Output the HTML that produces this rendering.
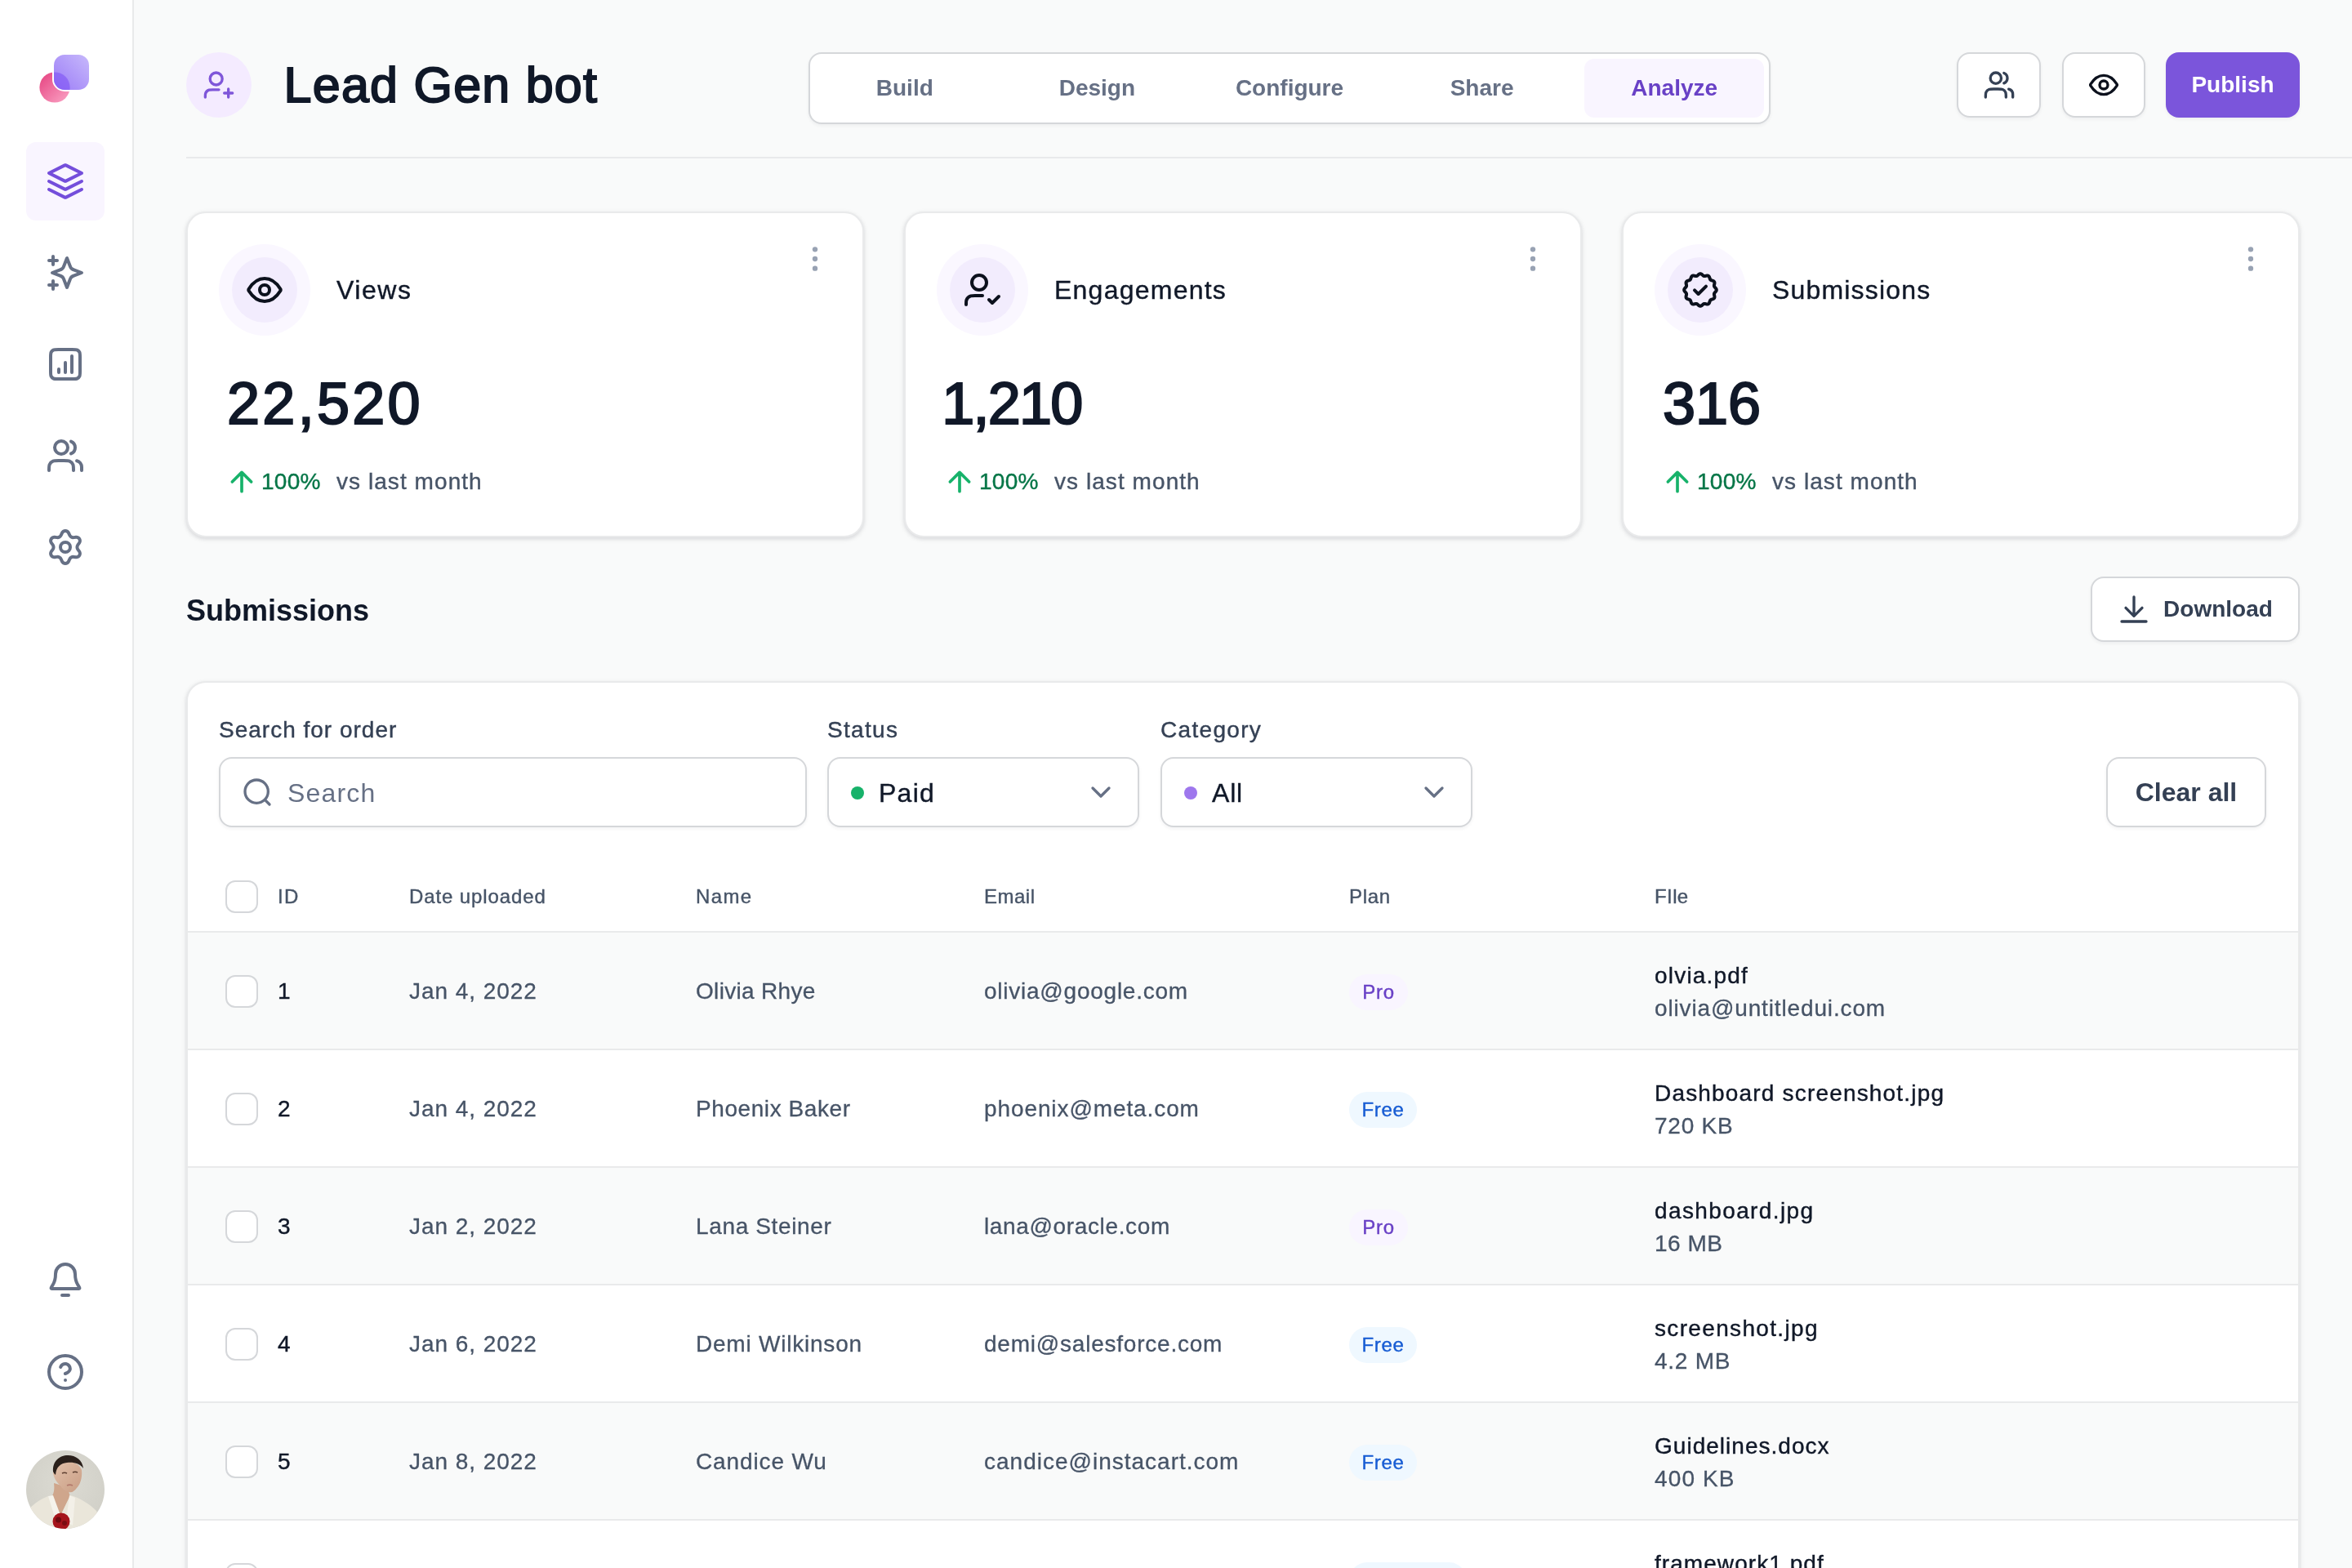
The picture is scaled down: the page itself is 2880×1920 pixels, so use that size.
<!DOCTYPE html>
<html>
<head>
<meta charset="utf-8">
<style>
*{box-sizing:border-box;margin:0;padding:0}
html,body{width:1440px;height:960px;overflow:hidden;background:#F9FAFA}
@media (min-width:2000px){html{zoom:2}}
body{font-family:"Liberation Sans",sans-serif;color:#101828;position:relative;will-change:transform}
.abs{position:absolute}
svg{display:block}
.sb{position:absolute;left:0;top:0;width:82px;height:960px;background:#fff;border-right:1px solid #E9EAEB}
.nav{position:absolute;left:16px;width:48px;height:48px;border-radius:6px;display:flex;align-items:center;justify-content:center}
.nav.act{background:#F9F5FF}
.ic{fill:none;stroke-linecap:round;stroke-linejoin:round}
</style>
</head>
<body>
<!-- SIDEBAR -->
<div class="sb">
  <!-- logo -->
  <svg class="abs" style="left:20px;top:28px" width="40" height="40" viewBox="0 0 40 40">
    <defs>
      <linearGradient id="lgc" x1="0" y1="0" x2="1" y2="1"><stop offset="0" stop-color="#E5407F"/><stop offset="1" stop-color="#FBA6C6"/></linearGradient>
      <linearGradient id="lgs" x1="1" y1="0" x2="0" y2="1"><stop offset="0" stop-color="#C7B9FB"/><stop offset="1" stop-color="#9B7BF7"/></linearGradient>
      <clipPath id="lsq"><rect x="13" y="5.5" width="21.5" height="21.5" rx="6.5"/></clipPath>
    </defs>
    <circle cx="13.5" cy="25.5" r="9.3" fill="url(#lgc)"/>
    <rect x="12" y="4.5" width="23.5" height="23.5" rx="7.5" fill="#fff"/>
    <rect x="13" y="5.5" width="21.5" height="21.5" rx="6.5" fill="url(#lgs)"/>
    <circle cx="13.5" cy="25.5" r="9.3" fill="#7A4CF4" opacity=".55" clip-path="url(#lsq)"/>
  </svg>
  <div class="nav act" style="top:87px">
    <svg width="24" height="24" viewBox="0 0 24 24" class="ic" stroke="#744EDB" stroke-width="2"><path d="M2 12L11.642 16.821C11.773 16.887 11.839 16.92 11.908 16.933C11.969 16.944 12.031 16.944 12.092 16.933C12.161 16.92 12.227 16.887 12.358 16.821L22 12M2 17L11.642 21.821C11.773 21.887 11.839 21.92 11.908 21.933C11.969 21.944 12.031 21.944 12.092 21.933C12.161 21.92 12.227 21.887 12.358 21.821L22 17M2 7L11.642 2.179C11.773 2.113 11.839 2.08 11.908 2.067C11.969 2.056 12.031 2.056 12.092 2.067C12.161 2.08 12.227 2.113 12.358 2.179L22 7L12.358 11.821C12.227 11.887 12.161 11.92 12.092 11.933C12.031 11.944 11.969 11.944 11.908 11.933C11.839 11.92 11.773 11.887 11.642 11.821L2 7Z"/></svg>
  </div>
  <div class="nav" style="top:143px">
    <svg width="24" height="24" viewBox="0 0 24 24" class="ic" stroke="#667085" stroke-width="2"><path d="M4.5 22V17M4.5 7V2M2 4.5H7M2 19.5H7M13 3L11.266 7.509C10.984 8.242 10.843 8.609 10.624 8.917C10.429 9.19 10.19 9.429 9.917 9.624C9.609 9.843 9.242 9.984 8.509 10.266L4 12L8.509 13.734C9.242 14.016 9.609 14.157 9.917 14.376C10.19 14.571 10.429 14.81 10.624 15.083C10.843 15.391 10.984 15.758 11.266 16.491L13 21L14.734 16.491C15.016 15.758 15.157 15.391 15.376 15.083C15.571 14.81 15.81 14.571 16.083 14.376C16.391 14.157 16.758 14.016 17.491 13.734L22 12L17.491 10.266C16.758 9.984 16.391 9.843 16.083 9.624C15.81 9.429 15.571 9.19 15.376 8.917C15.157 8.609 15.016 8.242 14.734 7.509L13 3Z"/></svg>
  </div>
  <div class="nav" style="top:199px">
    <svg width="24" height="24" viewBox="0 0 24 24" class="ic" stroke="#667085" stroke-width="2"><path d="M8 15V17M12 11V17M16 7V17M7.8 21H16.2C17.88 21 18.72 21 19.362 20.673C19.927 20.385 20.385 19.927 20.673 19.362C21 18.72 21 17.88 21 16.2V7.8C21 6.12 21 5.28 20.673 4.638C20.385 4.073 19.927 3.615 19.362 3.327C18.72 3 17.88 3 16.2 3H7.8C6.12 3 5.28 3 4.638 3.327C4.073 3.615 3.615 4.073 3.327 4.638C3 5.28 3 6.12 3 7.8V16.2C3 17.88 3 18.72 3.327 19.362C3.615 19.927 4.073 20.385 4.638 20.673C5.28 21 6.12 21 7.8 21Z"/></svg>
  </div>
  <div class="nav" style="top:255px">
    <svg width="24" height="24" viewBox="0 0 24 24" class="ic" stroke="#667085" stroke-width="2"><path d="M22 21V19C22 17.136 20.725 15.57 19 15.126M15.5 3.291C16.966 3.884 18 5.321 18 7C18 8.679 16.966 10.116 15.5 10.709M17 21C17 19.136 17 18.204 16.696 17.469C16.29 16.489 15.511 15.71 14.531 15.304C13.796 15 12.864 15 11 15H8C6.136 15 5.204 15 4.469 15.304C3.489 15.71 2.71 16.489 2.304 17.469C2 18.204 2 19.136 2 21M13.5 7C13.5 9.209 11.709 11 9.5 11C7.291 11 5.5 9.209 5.5 7C5.5 4.791 7.291 3 9.5 3C11.709 3 13.5 4.791 13.5 7Z"/></svg>
  </div>
  <div class="nav" style="top:311px">
    <svg width="24" height="24" viewBox="0 0 24 24" class="ic" stroke="#667085" stroke-width="2"><path d="M9.395 19.371L9.979 20.686C10.153 21.077 10.437 21.409 10.796 21.643C11.155 21.876 11.574 22 12.002 22C12.43 22 12.849 21.876 13.208 21.643C13.567 21.409 13.85 21.077 14.024 20.686L14.608 19.371C14.816 18.905 15.166 18.516 15.608 18.26C16.053 18.003 16.568 17.894 17.078 17.948L18.508 18.1C18.934 18.145 19.364 18.066 19.745 17.871C20.127 17.677 20.443 17.376 20.657 17.006C20.871 16.635 20.974 16.21 20.951 15.783C20.929 15.356 20.783 14.944 20.531 14.598L19.684 13.434C19.383 13.017 19.221 12.515 19.224 12C19.224 11.487 19.386 10.986 19.688 10.571L20.535 9.408C20.787 9.062 20.933 8.65 20.955 8.223C20.978 7.795 20.876 7.371 20.662 7C20.448 6.629 20.131 6.328 19.75 6.134C19.368 5.94 18.939 5.861 18.513 5.906L17.083 6.058C16.572 6.111 16.058 6.002 15.613 5.746C15.17 5.488 14.82 5.097 14.613 4.629L14.024 3.314C13.85 2.923 13.567 2.591 13.208 2.357C12.849 2.124 12.43 2 12.002 2C11.574 2 11.155 2.124 10.796 2.357C10.437 2.591 10.153 2.923 9.979 3.314L9.395 4.629C9.188 5.097 8.838 5.488 8.395 5.746C7.95 6.002 7.436 6.111 6.925 6.058L5.491 5.906C5.065 5.861 4.635 5.94 4.254 6.134C3.872 6.328 3.556 6.629 3.342 7C3.128 7.371 3.025 7.795 3.048 8.223C3.07 8.65 3.217 9.062 3.468 9.408L4.315 10.571C4.617 10.986 4.78 11.487 4.779 12C4.78 12.513 4.617 13.014 4.315 13.429L3.468 14.592C3.217 14.938 3.07 15.35 3.048 15.777C3.025 16.205 3.128 16.63 3.342 17C3.556 17.371 3.873 17.671 4.254 17.865C4.635 18.06 5.065 18.139 5.491 18.094L6.921 17.942C7.431 17.889 7.946 17.998 8.391 18.254C8.835 18.511 9.187 18.902 9.395 19.371Z"/><path d="M12 15C13.657 15 15 13.657 15 12C15 10.343 13.657 9 12 9C10.343 9 9 10.343 9 12C9 13.657 10.343 15 12 15Z"/></svg>
  </div>
  <div class="nav" style="top:760px">
    <svg width="24" height="24" viewBox="0 0 24 24" class="ic" stroke="#667085" stroke-width="2"><path d="M10 21H14M18 8C18 6.409 17.368 4.883 16.243 3.757C15.117 2.632 13.591 2 12 2C10.409 2 8.883 2.632 7.757 3.757C6.632 4.883 6 6.409 6 8C6 11.09 5.22 13.206 4.351 14.603C3.617 15.782 3.25 16.371 3.264 16.536C3.279 16.718 3.317 16.787 3.464 16.896C3.597 16.995 4.194 16.995 5.389 16.995H18.611C19.806 16.995 20.403 16.995 20.536 16.896C20.683 16.787 20.721 16.718 20.736 16.536C20.75 16.371 20.383 15.782 19.649 14.603C18.78 13.206 18 11.09 18 8Z"/></svg>
  </div>
  <div class="nav" style="top:816px">
    <svg width="24" height="24" viewBox="0 0 24 24" class="ic" stroke="#667085" stroke-width="2"><path d="M9.09 9C9.325 8.332 9.789 7.768 10.4 7.409C11.011 7.051 11.729 6.919 12.427 7.039C13.125 7.159 13.759 7.522 14.215 8.064C14.671 8.606 14.921 9.292 14.92 10C14.92 12 11.92 13 11.92 13M12 17H12.01M22 12C22 17.523 17.523 22 12 22C6.477 22 2 17.523 2 12C2 6.477 6.477 2 12 2C17.523 2 22 6.477 22 12Z"/></svg>
  </div>
  <!-- avatar -->
  <svg class="abs" style="left:16px;top:888px" width="48" height="48" viewBox="0 0 96 96">
    <defs><clipPath id="avc"><circle cx="48" cy="48" r="48"/></clipPath>
    <radialGradient id="avbg" cx="0.5" cy="0.4" r="0.7"><stop offset="0" stop-color="#DCDBD3"/><stop offset="1" stop-color="#CFCEC6"/></radialGradient>
    <linearGradient id="avsk" x1="0" y1="0" x2="1" y2="1"><stop offset="0" stop-color="#E2C1AA"/><stop offset="1" stop-color="#C99E85"/></linearGradient></defs>
    <g clip-path="url(#avc)">
      <rect width="96" height="96" fill="url(#avbg)"/>
      <path d="M34 40 C35 48 34 54 30 58 L42 80 L54 56 C52 52 52 49 53 46 Z" fill="#CFA68C"/>
      <path d="M0 76 C6 68 16 60 27 56 L42 80 L54 55 C66 58 78 66 86 74 L96 96 L0 96 Z" fill="#EAE6DA"/>
      <path d="M27 56 L33 55 L43 82 L37 88 Z" fill="#F5F3EC"/>
      <path d="M53 55 L60 58 L57 92 L49 86 Z" fill="#F3F0E8"/>
      <path d="M42 15 C52 12 64 14 68 24 C69 34 66 42 62 46 C59 50 56 52 53 51 C48 50 44 47 42 43 C38 40 34 34 33 28 C34 22 37 17 42 15 Z" fill="url(#avsk)"/>
      <path d="M33 26 C32 13 41 6 51 6 C61 6 69 12 70 22 C66 16 58 14 50 15 C42 16 37 20 36 30 C35 29 34 28 33 26 Z" fill="#2A201B"/>
      <path d="M44 28 C46 27 48 27 50 28 M57 27 C59 26 61 26 63 27" stroke="#5E4032" stroke-width="1.4" fill="none"/>
      <path d="M50 43 C52 42 55 42 57 43" stroke="#B27A6C" stroke-width="1.6" fill="none"/>
      <circle cx="43" cy="87" r="10.5" fill="#A5141B"/>
      <circle cx="39.5" cy="85" r="3.5" fill="#6E0B10"/>
      <circle cx="47" cy="89" r="3" fill="#7A0D12"/>
    </g>
  </svg>
</div>

<!-- MAIN -->
<div id="main">
<style>
.t{position:absolute;white-space:nowrap;line-height:1;letter-spacing:.03em}
.t.b{letter-spacing:0}
.btn{position:absolute;background:#fff;border:1px solid #D5D7DA;border-radius:8px;box-shadow:0 1px 2px rgba(16,24,40,.05);display:flex;align-items:center;justify-content:center}
.card{position:absolute;background:#fff;border:1px solid #E9EAEB;border-radius:12px;box-shadow:0 1px 3px rgba(16,24,40,.10),0 1px 2px rgba(16,24,40,.06)}
.fi{position:absolute;width:56px;height:56px;border-radius:50%;background:#FAF7FF;display:flex;align-items:center;justify-content:center}
.fi>div{width:40px;height:40px;border-radius:50%;background:#F2ECFD;display:flex;align-items:center;justify-content:center}
.lbl{font-size:14px;color:#344054;-webkit-text-stroke:.2px #344054}
.md{-webkit-text-stroke:.2px currentColor}
.inp{position:absolute;top:463.5px;height:43px;background:#fff;border:1px solid #D5D7DA;border-radius:8px;box-shadow:0 1px 2px rgba(16,24,40,.05)}
.row{position:absolute;left:0;width:1292px;height:72px;border-top:1px solid #E9EAEB}
.row.g{background:#F9FAFA}
.cb{position:absolute;left:23px;width:20px;height:20px;border:1px solid #D5D7DA;border-radius:6px;background:#fff}
.cell{font-size:14px;color:#475467;-webkit-text-stroke:.15px #475467}
.badge{position:absolute;height:22px;border-radius:11px;font-size:12px;display:flex;align-items:center;justify-content:center;letter-spacing:.03em;-webkit-text-stroke:.2px currentColor}
.pro{background:#F9F5FF;color:#6941C6}
.free{background:#EFF8FF;color:#175CD3}
</style>
<!-- HEADER -->
<div class="abs" style="left:114px;top:32px;width:40px;height:40px;border-radius:50%;background:#F4EBFF;display:flex;align-items:center;justify-content:center">
  <svg width="20" height="20" viewBox="0 0 24 24" class="ic" stroke="#7F56D9" stroke-width="2"><path d="M12 15.5H7.5C6.104 15.5 5.407 15.5 4.839 15.672C3.56 16.06 2.56 17.06 2.172 18.339C2 18.907 2 19.604 2 21M19 21V15M16 18H22M14.5 7.5C14.5 9.985 12.485 12 10 12C7.515 12 5.5 9.985 5.5 7.5C5.5 5.015 7.515 3 10 3C12.485 3 14.5 5.015 14.5 7.5Z"/></svg>
</div>
<div class="t" id="title" style="letter-spacing:0.62px;left:173.8px;top:37.2px;font-size:30.5px;font-weight:400;-webkit-text-stroke:1px #101828;color:#101828">Lead Gen bot</div>

<div class="abs" style="left:495px;top:32px;width:589px;height:44px;background:#fff;border:1px solid #D5D7DA;border-radius:8px;box-shadow:0 1px 2px rgba(16,24,40,.05);padding:3px;display:flex;gap:8px">
  <div class="tab" style="flex:1;display:flex;align-items:center;justify-content:center;font-size:14px;font-weight:700;color:#667085">Build</div>
  <div class="tab" style="flex:1;display:flex;align-items:center;justify-content:center;font-size:14px;font-weight:700;color:#667085">Design</div>
  <div class="tab" style="flex:1;display:flex;align-items:center;justify-content:center;font-size:14px;font-weight:700;color:#667085">Configure</div>
  <div class="tab" style="flex:1;display:flex;align-items:center;justify-content:center;font-size:14px;font-weight:700;color:#667085">Share</div>
  <div class="tab" style="flex:1;display:flex;align-items:center;justify-content:center;font-size:14px;font-weight:700;color:#6941C6;background:#F9F5FF;border-radius:6px">Analyze</div>
</div>

<div class="btn" style="left:1198px;top:32px;width:51.5px;height:40px">
  <svg width="20" height="20" viewBox="0 0 24 24" class="ic" stroke="#344054" stroke-width="2"><path d="M22 21V19C22 17.136 20.725 15.57 19 15.126M15.5 3.291C16.966 3.884 18 5.321 18 7C18 8.679 16.966 10.116 15.5 10.709M17 21C17 19.136 17 18.204 16.696 17.469C16.29 16.489 15.511 15.71 14.531 15.304C13.796 15 12.864 15 11 15H8C6.136 15 5.204 15 4.469 15.304C3.489 15.71 2.71 16.489 2.304 17.469C2 18.204 2 19.136 2 21M13.5 7C13.5 9.209 11.709 11 9.5 11C7.291 11 5.5 9.209 5.5 7C5.5 4.791 7.291 3 9.5 3C11.709 3 13.5 4.791 13.5 7Z"/></svg>
</div>
<div class="btn" style="left:1262.5px;top:32px;width:51px;height:40px">
  <svg width="20" height="20" viewBox="0 0 24 24" class="ic" stroke="#0C111D" stroke-width="2"><path d="M2.42 12.713C2.284 12.498 2.216 12.39 2.178 12.223C2.149 12.098 2.149 11.902 2.178 11.777C2.216 11.61 2.284 11.502 2.42 11.287C3.546 9.505 6.895 5 12 5C17.105 5 20.455 9.505 21.58 11.287C21.716 11.502 21.785 11.61 21.822 11.777C21.851 11.902 21.851 12.098 21.822 12.223C21.785 12.39 21.716 12.498 21.58 12.713C20.455 14.495 17.105 19 12 19C6.895 19 3.546 14.495 2.42 12.713Z"/><path d="M12 15C13.657 15 15 13.657 15 12C15 10.343 13.657 9 12 9C10.343 9 9 10.343 9 12C9 13.657 10.343 15 12 15Z"/></svg>
</div>
<div class="abs" style="left:1326px;top:32px;width:82px;height:40px;border-radius:8px;background:#7B55DB;box-shadow:0 1px 2px rgba(16,24,40,.05);color:#fff;font-size:14px;font-weight:700;display:flex;align-items:center;justify-content:center">Publish</div>

<div class="abs" style="left:114px;top:96px;width:1326px;height:1px;background:#E9EAEB"></div>

<!-- CARDS -->
<div class="card" style="left:114px;top:129.5px;width:415px;height:199.5px">
  <div class="fi" style="left:19px;top:19px"><div><svg width="24" height="24" viewBox="0 0 24 24" class="ic" stroke="#0C111D" stroke-width="2"><path d="M2.42 12.713C2.284 12.498 2.216 12.39 2.178 12.223C2.149 12.098 2.149 11.902 2.178 11.777C2.216 11.61 2.284 11.502 2.42 11.287C3.546 9.505 6.895 5 12 5C17.105 5 20.455 9.505 21.58 11.287C21.716 11.502 21.785 11.61 21.822 11.777C21.851 11.902 21.851 12.098 21.822 12.223C21.785 12.39 21.716 12.498 21.58 12.713C20.455 14.495 17.105 19 12 19C6.895 19 3.546 14.495 2.42 12.713Z"/><path d="M12 15C13.657 15 15 13.657 15 12C15 10.343 13.657 9 12 9C10.343 9 9 10.343 9 12C9 13.657 10.343 15 12 15Z"/></svg></div></div>
  <div class="t" style="left:91px;top:39px;font-size:16px;color:#101828;-webkit-text-stroke:.2px #101828;letter-spacing:0.78px">Views</div>
  <svg class="abs" style="left:373.8px;top:18px" width="20" height="20" viewBox="0 0 24 24" fill="#98A2B3"><circle cx="12" cy="5" r="1.9"/><circle cx="12" cy="12" r="1.9"/><circle cx="12" cy="19" r="1.9"/></svg>
  <div class="t b" style="left:24px;top:98.5px;font-size:36px;font-weight:400;-webkit-text-stroke:1.1px #101828;color:#101828;letter-spacing:1.64px">22,520</div>
  <svg class="abs" style="left:23.2px;top:154.5px" width="20" height="20" viewBox="0 0 24 24" fill="none" stroke="#17B26A" stroke-width="2.2" stroke-linecap="round" stroke-linejoin="round"><path d="M12 19V5M12 5L5 12M12 5L19 12"/></svg>
  <div class="t md" style="left:45px;top:157.5px;font-size:14px;color:#067647;letter-spacing:0.13px">100%</div>
  <div class="t md" style="left:91px;top:157.5px;font-size:14px;color:#475467;letter-spacing:0.53px">vs last month</div>
</div>
<div class="card" style="left:553.5px;top:129.5px;width:415px;height:199.5px">
  <div class="fi" style="left:19px;top:19px"><div><svg width="24" height="24" viewBox="0 0 24 24" class="ic" stroke="#0C111D" stroke-width="2"><path d="M12 15.5H7.5C6.104 15.5 5.407 15.5 4.839 15.672C3.56 16.06 2.56 17.06 2.172 18.339C2 18.907 2 19.604 2 21M16 18L18 20L22 16M14.5 7.5C14.5 9.985 12.485 12 10 12C7.515 12 5.5 9.985 5.5 7.5C5.5 5.015 7.515 3 10 3C12.485 3 14.5 5.015 14.5 7.5Z"/></svg></div></div>
  <div class="t" style="left:91px;top:39px;font-size:16px;color:#101828;-webkit-text-stroke:.2px #101828;letter-spacing:0.62px">Engagements</div>
  <svg class="abs" style="left:373.8px;top:18px" width="20" height="20" viewBox="0 0 24 24" fill="#98A2B3"><circle cx="12" cy="5" r="1.9"/><circle cx="12" cy="12" r="1.9"/><circle cx="12" cy="19" r="1.9"/></svg>
  <div class="t b" style="left:22.1px;top:98.5px;font-size:36px;font-weight:400;-webkit-text-stroke:1.1px #101828;color:#101828;letter-spacing:-0.87px">1,210</div>
  <svg class="abs" style="left:23.2px;top:154.5px" width="20" height="20" viewBox="0 0 24 24" fill="none" stroke="#17B26A" stroke-width="2.2" stroke-linecap="round" stroke-linejoin="round"><path d="M12 19V5M12 5L5 12M12 5L19 12"/></svg>
  <div class="t md" style="left:45px;top:157.5px;font-size:14px;color:#067647;letter-spacing:0.13px">100%</div>
  <div class="t md" style="left:91px;top:157.5px;font-size:14px;color:#475467;letter-spacing:0.53px">vs last month</div>
</div>
<div class="card" style="left:993px;top:129.5px;width:415px;height:199.5px">
  <div class="fi" style="left:19px;top:19px"><div><svg width="24" height="24" viewBox="0 0 24 24" class="ic" stroke="#0C111D" stroke-width="2"><path d="M8.5 12.2L10.8 14.5L15.5 9.8"/><path d="M12.00 2.10 L12.26 2.13 L12.51 2.22 L12.76 2.36 L13.00 2.53 L13.22 2.73 L13.44 2.93 L13.64 3.12 L13.85 3.29 L14.06 3.42 L14.28 3.50 L14.51 3.54 L14.75 3.53 L15.01 3.49 L15.29 3.43 L15.58 3.36 L15.87 3.30 L16.16 3.27 L16.45 3.27 L16.71 3.32 L16.95 3.43 L17.16 3.58 L17.33 3.79 L17.48 4.03 L17.60 4.30 L17.69 4.58 L17.78 4.87 L17.86 5.14 L17.96 5.38 L18.08 5.60 L18.22 5.78 L18.40 5.92 L18.62 6.04 L18.86 6.14 L19.13 6.22 L19.42 6.31 L19.70 6.40 L19.97 6.52 L20.21 6.67 L20.42 6.84 L20.57 7.05 L20.68 7.29 L20.73 7.55 L20.73 7.84 L20.70 8.13 L20.64 8.42 L20.57 8.71 L20.51 8.99 L20.47 9.25 L20.46 9.49 L20.50 9.72 L20.58 9.94 L20.71 10.15 L20.88 10.36 L21.07 10.56 L21.27 10.78 L21.47 11.00 L21.64 11.24 L21.78 11.49 L21.87 11.74 L21.90 12.00 L21.87 12.26 L21.78 12.51 L21.64 12.76 L21.47 13.00 L21.27 13.22 L21.07 13.44 L20.88 13.64 L20.71 13.85 L20.58 14.06 L20.50 14.28 L20.46 14.51 L20.47 14.75 L20.51 15.01 L20.57 15.29 L20.64 15.58 L20.70 15.87 L20.73 16.16 L20.73 16.45 L20.68 16.71 L20.57 16.95 L20.42 17.16 L20.21 17.33 L19.97 17.48 L19.70 17.60 L19.42 17.69 L19.13 17.78 L18.86 17.86 L18.62 17.96 L18.40 18.08 L18.22 18.22 L18.08 18.40 L17.96 18.62 L17.86 18.86 L17.78 19.13 L17.69 19.42 L17.60 19.70 L17.48 19.97 L17.33 20.21 L17.16 20.42 L16.95 20.57 L16.71 20.68 L16.45 20.73 L16.16 20.73 L15.87 20.70 L15.58 20.64 L15.29 20.57 L15.01 20.51 L14.75 20.47 L14.51 20.46 L14.28 20.50 L14.06 20.58 L13.85 20.71 L13.64 20.88 L13.44 21.07 L13.22 21.27 L13.00 21.47 L12.76 21.64 L12.51 21.78 L12.26 21.87 L12.00 21.90 L11.74 21.87 L11.49 21.78 L11.24 21.64 L11.00 21.47 L10.78 21.27 L10.56 21.07 L10.36 20.88 L10.15 20.71 L9.94 20.58 L9.72 20.50 L9.49 20.46 L9.25 20.47 L8.99 20.51 L8.71 20.57 L8.42 20.64 L8.13 20.70 L7.84 20.73 L7.55 20.73 L7.29 20.68 L7.05 20.57 L6.84 20.42 L6.67 20.21 L6.52 19.97 L6.40 19.70 L6.31 19.42 L6.22 19.13 L6.14 18.86 L6.04 18.62 L5.92 18.40 L5.78 18.22 L5.60 18.08 L5.38 17.96 L5.14 17.86 L4.87 17.78 L4.58 17.69 L4.30 17.60 L4.03 17.48 L3.79 17.33 L3.58 17.16 L3.43 16.95 L3.32 16.71 L3.27 16.45 L3.27 16.16 L3.30 15.87 L3.36 15.58 L3.43 15.29 L3.49 15.01 L3.53 14.75 L3.54 14.51 L3.50 14.28 L3.42 14.06 L3.29 13.85 L3.12 13.64 L2.93 13.44 L2.73 13.22 L2.53 13.00 L2.36 12.76 L2.22 12.51 L2.13 12.26 L2.10 12.00 L2.13 11.74 L2.22 11.49 L2.36 11.24 L2.53 11.00 L2.73 10.78 L2.93 10.56 L3.12 10.36 L3.29 10.15 L3.42 9.94 L3.50 9.72 L3.54 9.49 L3.53 9.25 L3.49 8.99 L3.43 8.71 L3.36 8.42 L3.30 8.13 L3.27 7.84 L3.27 7.55 L3.32 7.29 L3.43 7.05 L3.58 6.84 L3.79 6.67 L4.03 6.52 L4.30 6.40 L4.58 6.31 L4.87 6.22 L5.14 6.14 L5.38 6.04 L5.60 5.92 L5.78 5.78 L5.92 5.60 L6.04 5.38 L6.14 5.14 L6.22 4.87 L6.31 4.58 L6.40 4.30 L6.52 4.03 L6.67 3.79 L6.84 3.58 L7.05 3.43 L7.29 3.32 L7.55 3.27 L7.84 3.27 L8.13 3.30 L8.42 3.36 L8.71 3.43 L8.99 3.49 L9.25 3.53 L9.49 3.54 L9.72 3.50 L9.94 3.42 L10.15 3.29 L10.36 3.12 L10.56 2.93 L10.78 2.73 L11.00 2.53 L11.24 2.36 L11.49 2.22 L11.74 2.13Z"/></svg></div></div>
  <div class="t" style="left:91px;top:39px;font-size:16px;color:#101828;-webkit-text-stroke:.2px #101828;letter-spacing:0.59px">Submissions</div>
  <svg class="abs" style="left:373.8px;top:18px" width="20" height="20" viewBox="0 0 24 24" fill="#98A2B3"><circle cx="12" cy="5" r="1.9"/><circle cx="12" cy="12" r="1.9"/><circle cx="12" cy="19" r="1.9"/></svg>
  <div class="t b" style="left:24px;top:98.5px;font-size:36px;font-weight:400;-webkit-text-stroke:1.1px #101828;color:#101828">316</div>
  <svg class="abs" style="left:23.2px;top:154.5px" width="20" height="20" viewBox="0 0 24 24" fill="none" stroke="#17B26A" stroke-width="2.2" stroke-linecap="round" stroke-linejoin="round"><path d="M12 19V5M12 5L5 12M12 5L19 12"/></svg>
  <div class="t md" style="left:45px;top:157.5px;font-size:14px;color:#067647;letter-spacing:0.13px">100%</div>
  <div class="t md" style="left:91px;top:157.5px;font-size:14px;color:#475467;letter-spacing:0.53px">vs last month</div>
</div>


<!-- SUBMISSIONS -->
<div class="t b" style="left:114px;top:365px;font-size:18px;font-weight:700;color:#101828">Submissions</div>
<div class="btn" style="left:1280px;top:353px;width:128px;height:40px;gap:8px;font-size:14px;font-weight:700;color:#344054">
  <svg width="20" height="20" viewBox="0 0 24 24" class="ic" stroke="#344054" stroke-width="2"><path d="M21 21H3M18 11L12 17M12 17L6 11M12 17V3"/></svg>Download
</div>

<div class="card" style="left:114px;top:417px;width:1294px;height:600px;overflow:hidden;border-bottom:none;border-radius:12px 12px 0 0">
  <div class="t lbl" style="left:19px;top:22px;letter-spacing:0.5px">Search for order</div>
  <div class="inp" style="left:19px;top:45.5px;width:360px"></div>
  <svg class="abs" style="left:32.5px;top:57px" width="20" height="20" viewBox="0 0 24 24" fill="none" stroke="#667085" stroke-width="2" stroke-linecap="round" stroke-linejoin="round"><path d="M21 21L17.5 17.5M20 11.5C20 16.194 16.194 20 11.5 20C6.806 20 3 16.194 3 11.5C3 6.806 6.806 3 11.5 3C16.194 3 20 6.806 20 11.5Z"/></svg>
  <div class="t" style="left:61px;top:59.5px;font-size:16px;color:#667085;letter-spacing:0.58px">Search</div>

  <div class="t lbl" style="left:391.5px;top:22px;letter-spacing:0.66px">Status</div>
  <div class="inp" style="left:391.5px;top:45.5px;width:191px"></div>
  <div class="abs" style="left:406px;top:63.5px;width:8px;height:8px;border-radius:50%;background:#17B26A"></div>
  <div class="t" style="left:423px;top:59.5px;font-size:16px;color:#101828;-webkit-text-stroke:.2px #101828;letter-spacing:0.63px">Paid</div>
  <svg class="abs" style="left:548.8px;top:57px" width="20" height="20" viewBox="0 0 24 24" fill="none" stroke="#667085" stroke-width="2" stroke-linecap="round" stroke-linejoin="round"><path d="M6 9L12 15L18 9"/></svg>

  <div class="t lbl" style="left:595.5px;top:22px;letter-spacing:0.66px">Category</div>
  <div class="inp" style="left:595.5px;top:45.5px;width:191px"></div>
  <div class="abs" style="left:610px;top:63.5px;width:8px;height:8px;border-radius:50%;background:#9E77ED"></div>
  <div class="t" style="left:627px;top:59.5px;font-size:16px;color:#101828;-webkit-text-stroke:.2px #101828;letter-spacing:0.4px">All</div>
  <svg class="abs" style="left:752.8px;top:57px" width="20" height="20" viewBox="0 0 24 24" fill="none" stroke="#667085" stroke-width="2" stroke-linecap="round" stroke-linejoin="round"><path d="M6 9L12 15L18 9"/></svg>

  <div class="btn" style="left:1174.5px;top:45.5px;width:98px;height:43px;font-size:16px;font-weight:700;color:#344054">Clear all</div>

  <!-- table header -->
  <div class="cb" style="top:121px"></div>
  <div class="t" style="left:55px;top:125px;font-size:12px;color:#475467;-webkit-text-stroke:.2px #475467;letter-spacing:0.7px">ID</div>
  <div class="t" style="left:135.5px;top:125px;font-size:12px;color:#475467;-webkit-text-stroke:.2px #475467;letter-spacing:0.45px">Date uploaded</div>
  <div class="t" style="left:311px;top:125px;font-size:12px;color:#475467;-webkit-text-stroke:.2px #475467;letter-spacing:0.7px">Name</div>
  <div class="t" style="left:487.5px;top:125px;font-size:12px;color:#475467;-webkit-text-stroke:.2px #475467;letter-spacing:0.25px">Email</div>
  <div class="t" style="left:711px;top:125px;font-size:12px;color:#475467;-webkit-text-stroke:.2px #475467;letter-spacing:0.33px">Plan</div>
  <div class="t" style="left:898px;top:125px;font-size:12px;color:#475467;-webkit-text-stroke:.2px #475467;letter-spacing:0.2px">FIle</div>
  <div class="row g" style="top:152px">
    <div class="cb" style="top:26px"></div>
    <div class="t" style="left:55px;top:29px;font-size:14px;color:#101828;-webkit-text-stroke:.2px #101828">1</div>
    <div class="t cell" style="left:135.5px;top:29px;letter-spacing:0.47px">Jan 4, 2022</div>
    <div class="t cell" style="left:311px;top:29px;letter-spacing:0.16px">Olivia Rhye</div>
    <div class="t cell" style="left:487.5px;top:29px;letter-spacing:0.38px">olivia@google.com</div>
    <div class="badge pro" style="left:711px;top:25.5px;width:36px">Pro</div>
    <div class="t" style="left:898px;top:19.5px;font-size:14px;color:#101828;-webkit-text-stroke:.2px #101828;letter-spacing:0.6px">olvia.pdf</div>
    <div class="t cell" style="left:898px;top:39.5px;letter-spacing:0.43px">olivia@untitledui.com</div>
  </div>
<div class="row" style="top:224px">
    <div class="cb" style="top:26px"></div>
    <div class="t" style="left:55px;top:29px;font-size:14px;color:#101828;-webkit-text-stroke:.2px #101828">2</div>
    <div class="t cell" style="left:135.5px;top:29px;letter-spacing:0.47px">Jan 4, 2022</div>
    <div class="t cell" style="left:311px;top:29px;letter-spacing:0.29px">Phoenix Baker</div>
    <div class="t cell" style="left:487.5px;top:29px;letter-spacing:0.45px">phoenix@meta.com</div>
    <div class="badge free" style="left:711px;top:25.5px;width:41.5px">Free</div>
    <div class="t" style="left:898px;top:19.5px;font-size:14px;color:#101828;-webkit-text-stroke:.2px #101828;letter-spacing:0.59px">Dashboard screenshot.jpg</div>
    <div class="t cell" style="left:898px;top:39.5px;letter-spacing:0.38px">720 KB</div>
  </div>
<div class="row g" style="top:296px">
    <div class="cb" style="top:26px"></div>
    <div class="t" style="left:55px;top:29px;font-size:14px;color:#101828;-webkit-text-stroke:.2px #101828">3</div>
    <div class="t cell" style="left:135.5px;top:29px;letter-spacing:0.47px">Jan 2, 2022</div>
    <div class="t cell" style="left:311px;top:29px;letter-spacing:0.32px">Lana Steiner</div>
    <div class="t cell" style="left:487.5px;top:29px;letter-spacing:0.32px">lana@oracle.com</div>
    <div class="badge pro" style="left:711px;top:25.5px;width:36px">Pro</div>
    <div class="t" style="left:898px;top:19.5px;font-size:14px;color:#101828;-webkit-text-stroke:.2px #101828;letter-spacing:0.69px">dashboard.jpg</div>
    <div class="t cell" style="left:898px;top:39.5px;letter-spacing:0.25px">16 MB</div>
  </div>
<div class="row" style="top:368px">
    <div class="cb" style="top:26px"></div>
    <div class="t" style="left:55px;top:29px;font-size:14px;color:#101828;-webkit-text-stroke:.2px #101828">4</div>
    <div class="t cell" style="left:135.5px;top:29px;letter-spacing:0.47px">Jan 6, 2022</div>
    <div class="t cell" style="left:311px;top:29px;letter-spacing:0.39px">Demi Wilkinson</div>
    <div class="t cell" style="left:487.5px;top:29px;letter-spacing:0.39px">demi@salesforce.com</div>
    <div class="badge free" style="left:711px;top:25.5px;width:41.5px">Free</div>
    <div class="t" style="left:898px;top:19.5px;font-size:14px;color:#101828;-webkit-text-stroke:.2px #101828;letter-spacing:0.67px">screenshot.jpg</div>
    <div class="t cell" style="left:898px;top:39.5px;letter-spacing:0.38px">4.2 MB</div>
  </div>
<div class="row g" style="top:440px">
    <div class="cb" style="top:26px"></div>
    <div class="t" style="left:55px;top:29px;font-size:14px;color:#101828;-webkit-text-stroke:.2px #101828">5</div>
    <div class="t cell" style="left:135.5px;top:29px;letter-spacing:0.47px">Jan 8, 2022</div>
    <div class="t cell" style="left:311px;top:29px;letter-spacing:0.44px">Candice Wu</div>
    <div class="t cell" style="left:487.5px;top:29px;letter-spacing:0.5px">candice@instacart.com</div>
    <div class="badge free" style="left:711px;top:25.5px;width:41.5px">Free</div>
    <div class="t" style="left:898px;top:19.5px;font-size:14px;color:#101828;-webkit-text-stroke:.2px #101828;letter-spacing:0.51px">Guidelines.docx</div>
    <div class="t cell" style="left:898px;top:39.5px;letter-spacing:0.56px">400 KB</div>
  </div>
<div class="row" style="top:512px">
    <div class="cb" style="top:26px"></div>
    <div class="t" style="left:55px;top:29px;font-size:14px;color:#101828;-webkit-text-stroke:.2px #101828">6</div>
    <div class="t cell" style="left:135.5px;top:29px;letter-spacing:0.47px">Jan 6, 2022</div>
    <div class="t cell" style="left:311px;top:29px">Natali Craig</div>
    <div class="t cell" style="left:487.5px;top:29px">natali@walmart.com</div>
    <div class="badge free" style="left:711px;top:25.5px;width:72px">Business</div>
    <div class="t" style="left:898px;top:19.5px;font-size:14px;color:#101828;-webkit-text-stroke:.2px #101828;letter-spacing:0.53px">framework1.pdf</div>
    <div class="t cell" style="left:898px;top:39.5px">1.2 MB</div>
  </div>

</div>
</div>
</body>
</html>
